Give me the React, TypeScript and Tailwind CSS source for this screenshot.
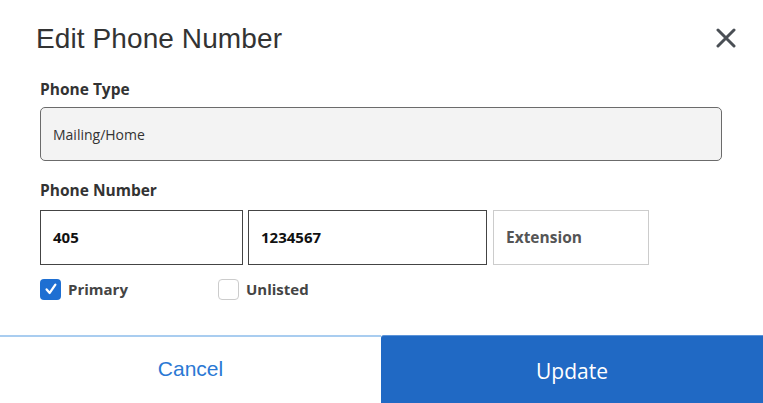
import React from 'react';

const sans = "font-['Open_Sans',sans-serif]";

export default function App() {
  return (
    <div className="w-[763px] h-[403px] bg-white flex flex-col overflow-hidden">
      {/* Header */}
      <div className="flex items-start justify-between pt-[25px] pl-[36px] pr-[27px]">
        <h1 className="font-['Liberation_Sans',Arial,sans-serif] text-[28px] leading-[28px] tracking-[0.1px] text-[#333333]">
          Edit Phone Number
        </h1>
        <button className="mt-[3px] w-[20px] h-[20px] text-[#4a4f55]">
          <svg viewBox="0 0 20 20" className="w-[20px] h-[20px]" fill="none" stroke="currentColor" strokeWidth="3" strokeLinecap="round">
            <path d="M2 2 L18 18 M18 2 L2 18" />
          </svg>
        </button>
      </div>

      {/* Body */}
      <div className={`flex flex-col pl-[40px] pr-[41px] ${sans}`}>
        <label className="mt-[26px] text-[15.5px] leading-[20px] font-bold text-[#333333]">Phone Type</label>
        <div className="mt-[8px] h-[54px] flex items-center px-[12px] bg-[#f3f3f3] border-[1.5px] border-[#6b6b6b] rounded-[5px] text-[14px] text-[#333333]">
          Mailing/Home
        </div>

        <label className="mt-[19px] text-[15.5px] leading-[20px] font-bold text-[#333333]">Phone Number</label>
        <div className="mt-[10px] flex gap-[5px]">
          <div className="w-[203px] h-[55px] flex items-center px-[12px] border-[1.5px] border-[#444444] text-[15px] font-bold text-[#111111]">
            405
          </div>
          <div className="w-[239px] h-[55px] flex items-center px-[12px] border-[1.5px] border-[#444444] text-[15px] font-bold text-[#111111]">
            1234567
          </div>
          <div className="ml-[1px] w-[156px] h-[55px] flex items-center px-[12px] border-[1.5px] border-[#cccccc] text-[15.5px] font-bold text-[#555555]">
            Extension
          </div>
        </div>

        <div className="mt-[13px] flex items-center">
          <div className="flex items-center gap-[7px] w-[178px]">
            <span className="w-[21px] h-[21px] rounded-[4px] bg-[#1e6fd2] flex items-center justify-center">
              <svg viewBox="0 0 16 16" className="w-[14px] h-[14px]" fill="none" stroke="white" strokeWidth="2.6" strokeLinecap="round" strokeLinejoin="round">
                <path d="M3 8.5 L6.5 12.5 L13 3" />
              </svg>
            </span>
            <span className="text-[15px] font-bold text-[#444444]">Primary</span>
          </div>
          <div className="flex items-center gap-[7px]">
            <span className="w-[21px] h-[21px] rounded-[4px] border-[1.5px] border-[#cccccc] bg-white" />
            <span className="text-[15px] font-bold text-[#444444]">Unlisted</span>
          </div>
        </div>
      </div>

      {/* Footer */}
      <div className="mt-auto h-[68px] flex">
        <button className="w-[381px] border-t-2 border-[#a9cdf0] flex items-center justify-center pb-[2px] font-['Liberation_Sans',Arial,sans-serif] text-[21px] text-[#2a78d4]">
          Cancel
        </button>
        <button className={`flex-1 bg-[#2069c4] rounded-tl-[3px] border-t border-[#5b93d8] flex items-center justify-center pt-[4px] text-[21px] text-white ${sans}`}>
          Update
        </button>
      </div>
    </div>
  );
}
